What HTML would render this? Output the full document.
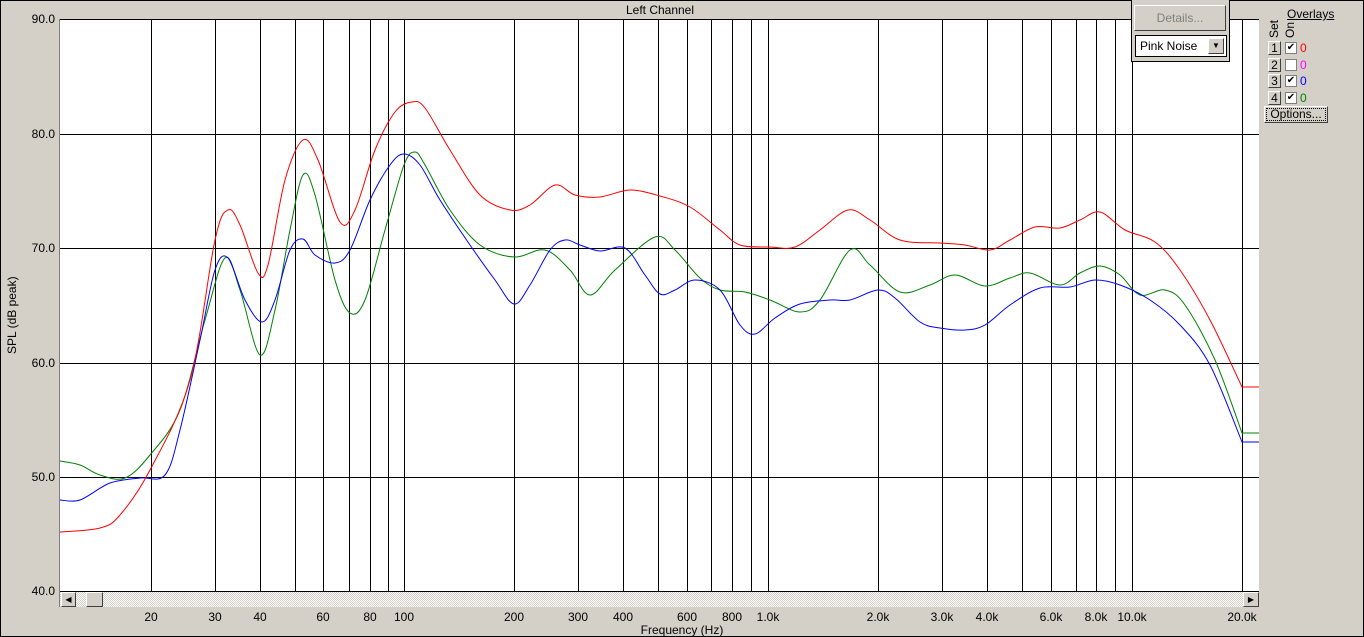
<!DOCTYPE html>
<html><head><style>
body{margin:0;width:1364px;height:637px;overflow:hidden;background:#d4d0c8;font-family:"Liberation Sans",Arial,sans-serif;font-size:12px;}
.wrap{position:absolute;left:0;top:0;width:1362px;height:635px;border:1px solid #000;background:#d4d0c8;}
.t{position:absolute;white-space:nowrap;color:#000;}
.btn{position:absolute;background:#d4d0c8;border:1px solid;border-color:#fff #404040 #404040 #fff;box-sizing:border-box;}
</style></head><body>
<div class="wrap"></div>
<svg style="position:absolute;left:0;top:0" width="1364" height="637">
<rect x="60" y="19" width="1199" height="572" fill="#fff"/>
<g stroke="#000" stroke-width="1">
<line x1="60" y1="19.5" x2="1259" y2="19.5"/><line x1="60" y1="134.5" x2="1259" y2="134.5"/><line x1="60" y1="248.5" x2="1259" y2="248.5"/><line x1="60" y1="363.5" x2="1259" y2="363.5"/><line x1="60" y1="477.5" x2="1259" y2="477.5"/>
<g id="v"></g>
</g>
<line x1="59.5" y1="19" x2="59.5" y2="607" stroke="#808080"/>
<path id="cg" fill="none" stroke="#008000" data-p="60,461 80,465 100,475 125,478 150,455 180,410 205,320 225,258 240,290 260,355 275,310 290,230 303,175 315,195 335,280 350,313 365,300 385,230 404,165 415,152 425,165 450,210 480,245 514,257 545,250 570,270 590,295 615,270 655,237 675,250 700,278 720,290 745,292 770,300 800,312 820,300 850,250 870,265 900,292 930,285 955,275 985,286 1010,278 1030,273 1060,285 1080,273 1100,266 1120,275 1140,295 1165,290 1185,305 1215,360 1242,433 1259,433"/>
<path id="cb" fill="none" stroke="#0000ff" data-p="60,500 80,500 110,483 140,478 165,475 180,430 200,340 215,270 228,258 245,300 262,322 275,300 290,250 303,239 315,255 335,263 350,250 370,200 390,165 404,154 420,165 440,200 470,245 495,280 514,304 530,285 550,250 565,240 580,245 600,251 625,248 645,275 660,294 675,290 695,280 720,290 740,325 755,334 775,318 800,304 830,300 850,300 878,290 895,298 920,322 940,328 965,330 985,325 1010,305 1040,288 1070,287 1095,280 1120,285 1150,300 1180,325 1210,365 1242,442 1259,442"/>
<path id="cr" fill="none" stroke="#ff0000" data-p="60,532 100,528 120,515 150,470 190,380 215,240 228,210 240,225 258,273 268,265 285,180 303,140 318,160 340,222 355,210 375,150 395,112 412,102 425,108 450,150 480,195 510,210 530,205 555,185 575,195 600,197 630,190 660,196 690,207 720,230 740,245 770,247 795,247 820,230 848,210 870,220 900,240 940,243 965,245 990,250 1010,240 1035,227 1060,228 1080,220 1100,212 1125,230 1155,242 1180,270 1210,320 1242,387 1259,387"/>
<defs><pattern id="p" width="2" height="2" patternUnits="userSpaceOnUse"><rect width="2" height="2" fill="#fff"/><rect width="1" height="1" fill="#d4d0c8"/><rect x="1" y="1" width="1" height="1" fill="#d4d0c8"/></pattern></defs>
<rect x="60" y="591" width="1199" height="16" fill="url(#p)"/>
<line x1="60" y1="591.5" x2="1259" y2="591.5" stroke="#000"/>
</svg>
<script>
var xs=[151,215,260,295,323,349,370,388,404,514,578,623,658,687,711,732,751,768,878,942,987,1022,1051,1076,1096,1115,1132,1242],g=document.getElementById('v'),s='';
xs.forEach(function(x){s+='<line x1="'+(x+.5)+'" y1="19" x2="'+(x+.5)+'" y2="591"/>';});g.innerHTML=s;
['cg','cb','cr'].forEach(function(id){var e=document.getElementById(id);var P=e.getAttribute('data-p').split(' ').map(function(q){return q.split(',').map(Number);});
var n=P.length-1,d='M'+P[0][0]+','+P[0][1];
for(var i=0;i<n-1;i++){var p0=P[Math.max(i-1,0)],p1=P[i],p2=P[i+1],p3=P[Math.min(i+2,n-1)];
d+=' C'+(p1[0]+(p2[0]-p0[0])/6)+','+(p1[1]+(p2[1]-p0[1])/6)+' '+(p2[0]-(p3[0]-p1[0])/6)+','+(p2[1]-(p3[1]-p1[1])/6)+' '+p2[0]+','+p2[1];}
d+=' L'+P[n][0]+','+P[n][1];e.setAttribute('d',d);e.removeAttribute('data-p');});
</script>
<div class="btn" style="left:61px;top:592px;width:15px;height:15px;font-size:8px;line-height:13px;text-align:center">◀</div>
<div class="btn" style="left:86px;top:592px;width:17px;height:15px"></div>
<div class="btn" style="left:1243px;top:592px;width:16px;height:15px;font-size:8px;line-height:13px;text-align:center">▶</div>
<div class="t" style="left:624px;top:3px;width:72px;text-align:center">Left Channel</div>
<div class="t" style="transform:rotate(-90deg);transform-origin:0 0;top:354px;left:5px">SPL (dB peak)</div>
<div class="t" style="left:20px;top:12px;width:35px;text-align:right">90.0</div>
<div class="t" style="left:20px;top:127px;width:35px;text-align:right">80.0</div>
<div class="t" style="left:20px;top:241px;width:35px;text-align:right">70.0</div>
<div class="t" style="left:20px;top:356px;width:35px;text-align:right">60.0</div>
<div class="t" style="left:20px;top:470px;width:35px;text-align:right">50.0</div>
<div class="t" style="left:20px;top:584px;width:35px;text-align:right">40.0</div>
<div id="xl"></div>
<div class="t" style="left:622px;top:623px;width:120px;text-align:center">Frequency (Hz)</div>
<script>
var L=[[151,'20'],[215,'30'],[260,'40'],[323,'60'],[370,'80'],[404,'100'],[514,'200'],[578,'300'],[623,'400'],[687,'600'],[732,'800'],[768,'1.0k'],[878,'2.0k'],[942,'3.0k'],[987,'4.0k'],[1051,'6.0k'],[1096,'8.0k'],[1132,'10.0k'],[1242,'20.0k']],h='';
L.forEach(function(a){h+='<div class="t" style="left:'+(a[0]-30)+'px;top:610px;width:60px;text-align:center">'+a[1]+'</div>';});document.getElementById('xl').innerHTML=h;
</script>
<div style="position:absolute;left:1131px;top:0;width:99px;height:62px;background:#d4d0c8;border:1px solid #000;border-top:none;box-sizing:border-box"></div>
<div class="btn" style="left:1134px;top:5px;width:92px;height:26px;color:#808080;text-align:center;line-height:24px">Details...</div>
<div style="position:absolute;left:1135px;top:35px;width:92px;height:22px;background:#fff;border:1px solid #000;box-sizing:border-box"></div>
<div class="t" style="left:1140px;top:39px">Pink Noise</div>
<div class="btn" style="left:1208px;top:38px;width:16px;height:16px;font-size:8px;text-align:center;line-height:14px">▼</div>
<div class="t" style="left:1287px;top:7px;text-decoration:underline">Overlays</div>
<div class="t" style="left:1268px;top:38px;transform:rotate(-90deg);transform-origin:0 0;line-height:12px">Set</div>
<div class="t" style="left:1284px;top:38px;transform:rotate(-90deg);transform-origin:0 0;line-height:12px">On</div>
<div id="ov"></div>
<script>
var c=['#ff0000','#ff00ff','#0000ff','#008000'],ch=[1,0,1,1],o='';
for(var i=0;i<4;i++){var y=41+i*16.5;
o+='<div class="btn" style="left:1268px;top:'+y+'px;width:13px;height:14px;line-height:12px;text-align:center">'+(i+1)+'</div>';
o+='<div style="position:absolute;left:1285px;top:'+(y+1)+'px;width:12px;height:12px;background:#fff;border:1px solid #808080;box-sizing:border-box;font-size:10px;line-height:10px;text-align:center">'+(ch[i]?'✔':'')+'</div>';
o+='<div class="t" style="left:1300px;top:'+y+'px;color:'+c[i]+'">0</div>';}
document.getElementById('ov').innerHTML=o;
</script>
<div class="btn" style="left:1264px;top:106px;width:64px;height:17px;line-height:14px;text-align:center;outline:1px dotted #000;outline-offset:-3px">Options...</div>
</body></html>
